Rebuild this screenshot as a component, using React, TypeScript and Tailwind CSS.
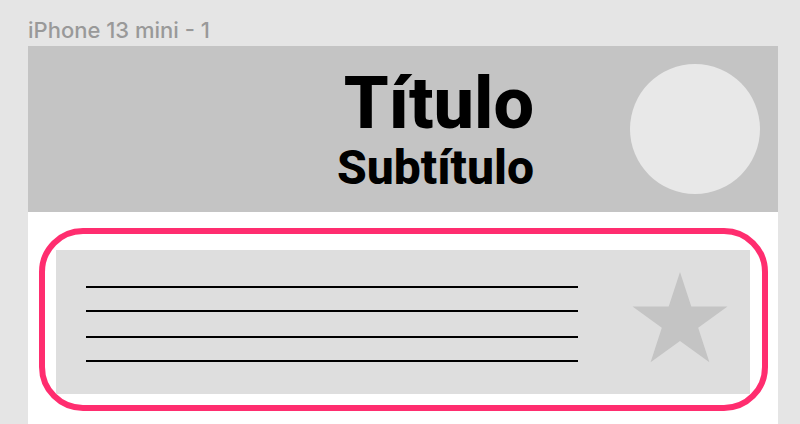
const lines = ['mt-0', 'mt-[22px]', 'mt-6', 'mt-[22px]'];

export default function App() {
  return (
    <main className="flex min-h-screen flex-col bg-[#e5e5e5] pl-7 pr-[22px] pt-4 font-['Inter',sans-serif]">
      <p className="h-[30px] text-[22px] font-medium leading-7 text-[#999999]">iPhone 13 mini - 1</p>
      <section className="flex grow flex-col bg-white">
        <header className="flex h-[166px] items-center bg-[#c4c4c4] pr-[18px] font-['Roboto',sans-serif] font-extrabold text-black">
          <div className="grow pt-0.5 text-right">
            <h1 className="text-[72px] leading-[76px]">Título</h1>
            <h2 className="text-[48px] leading-[52px]">Subtítulo</h2>
          </div>
          <div className="ml-24 size-[130px] shrink-0 rounded-full bg-[#e8e8e8]" />
        </header>
        <div className="ml-[11px] mr-[10px] mt-4 rounded-[44px] border-[6px] border-[#ff2d6f] pb-[11px] pl-[11px] pr-3 pt-4">
          <article className="flex h-36 items-start bg-[#dedede] pl-[30px] pr-[22px]">
            <div className="grow pt-9">
              {lines.map((gap, i) => (
                <div key={i} className={`h-0.5 bg-black ${gap}`} />
              ))}
            </div>
            <svg className="ml-[54px] mt-[22px] h-[92px] w-24 shrink-0" viewBox="0 0 96 92" aria-hidden="true">
              <path fill="#c4c4c4" d="M48 0L59.300 34.400H95.500L66.200 55.700L77.400 90.200L48 69L18.600 90.200L29.800 55.700L0.500 34.400H36.700Z" />
            </svg>
          </article>
        </div>
      </section>
    </main>
  );
}
